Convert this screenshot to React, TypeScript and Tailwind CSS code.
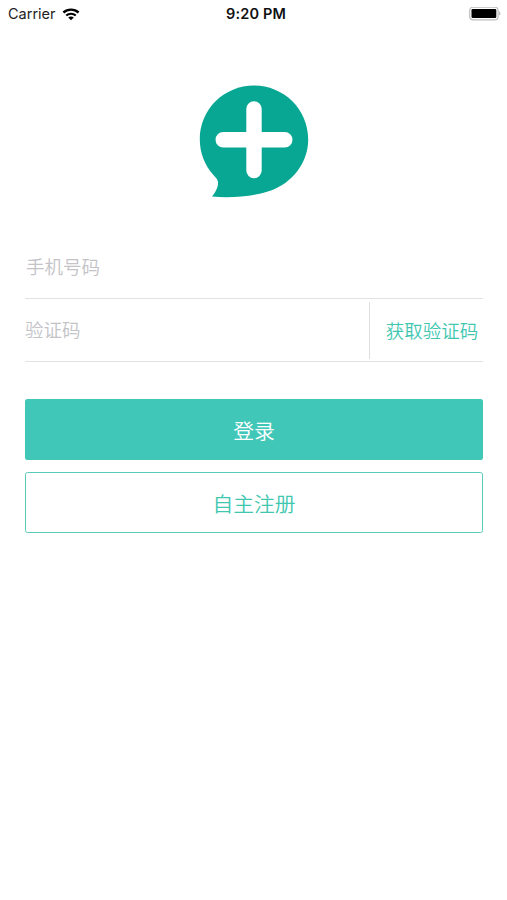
function StatusBar() {
  return (
    <header className="grid h-7 grid-cols-3 items-center pl-2 pr-[6px] font-['Inter','Liberation_Sans',sans-serif] text-[14px] leading-none text-[#222]">
      <div className="flex items-center gap-[6px]">
        <span className="text-[14.5px]">Carrier</span>
        <svg className="h-[13px] w-[18px]" viewBox="0 0 17 13" fill="none" aria-hidden="true">
          <path d="M.9 4.5C5.2 .6 11.800 .6 16.100 4.500" stroke="#000" strokeWidth="2.4" />
          <path d="M3.700 7.500C6.400 5.100 10.600 5.100 13.300 7.500" stroke="#000" strokeWidth="2.1" />
          <path d="M5.700 9.500C7.300 8.200 9.700 8.200 11.300 9.500L8.500 12.200Z" fill="#000" />
        </svg>
      </div>
      <span className="whitespace-nowrap pl-[3px] text-center text-[14.5px] font-semibold tracking-[0.15px] text-[#111]">9:20 PM</span>
      <svg className="h-[14px] w-[32px] justify-self-end" viewBox="0 0 32 14" aria-hidden="true">
        <rect x="0.7" y="0.2" width="28.4" height="12.6" rx="3.4" fill="#fff" stroke="#bdbdbd" strokeWidth="1.2" />
        <rect x="2.500" y="2" width="24.800" height="9" rx="1.3" fill="#000" />
        <path d="M30.200 4.600C31.800 5.400 31.800 7.800 30.200 8.600Z" fill="#aaa" />
      </svg>
    </header>
  );
}

function Logo() {
  return (
    <svg className="h-[113px] w-[110px]" viewBox="0 0 110 113" aria-hidden="true">
      <path
        d="M55 .5C84.500 .5 109.200 24 109.200 54.500C109.200 78 93 98 72 105.500C55 111.500 33 113.200 13 111.600C16.500 107.500 19.500 102 19 97C18.700 94 16.500 92.500 14 89.500C6 80.500 .8 68 .8 54.500C.8 24 25.500 .5 55 .5Z"
        fill="#07a793"
      />
      <path d="M55 24V85.500M24.200 54.700H85.800" stroke="#fff" strokeWidth="15.400" strokeLinecap="round" />
    </svg>
  );
}

export default function App() {
  return (
    <main className="min-h-[900px] w-[507px] bg-white font-['Noto_Sans_CJK_SC',sans-serif]">
      <StatusBar />
      <div className="flex justify-center pl-px pt-[57px]">
        <Logo />
      </div>
      <form className="ml-[25px] mt-[36px] w-[458px]">
        <div className="flex h-[65px] items-center border-b border-[#e2e2e2]">
          <span className="pl-px pt-px text-[18.5px] font-[350] text-[#c3c3c8]">手机号码</span>
        </div>
        <div className="flex h-[63px] items-center justify-between border-b border-[#e2e2e2]">
          <span className="pb-px text-[18.5px] font-[350] text-[#c3c3c8]">验证码</span>
          <button type="button" className="h-[57px] w-[114px] border-l border-[#dedede] pl-[11px] pt-[2px] text-[18.5px] font-[350] text-[#41c7b0]">
            获取验证码
          </button>
        </div>
        <button type="button" className="mt-[37px] block h-[61px] w-full rounded-[2.5px] bg-[#41c7b8] pt-[2px] text-[20.800px] font-[350] text-white">
          登录
        </button>
        <button type="button" className="mt-[12px] block h-[61px] w-full rounded-[2.5px] border border-[#5acbbb] pt-[2px] text-[20.800px] font-[350] text-[#41c7b0]">
          自主注册
        </button>
      </form>
    </main>
  );
}
